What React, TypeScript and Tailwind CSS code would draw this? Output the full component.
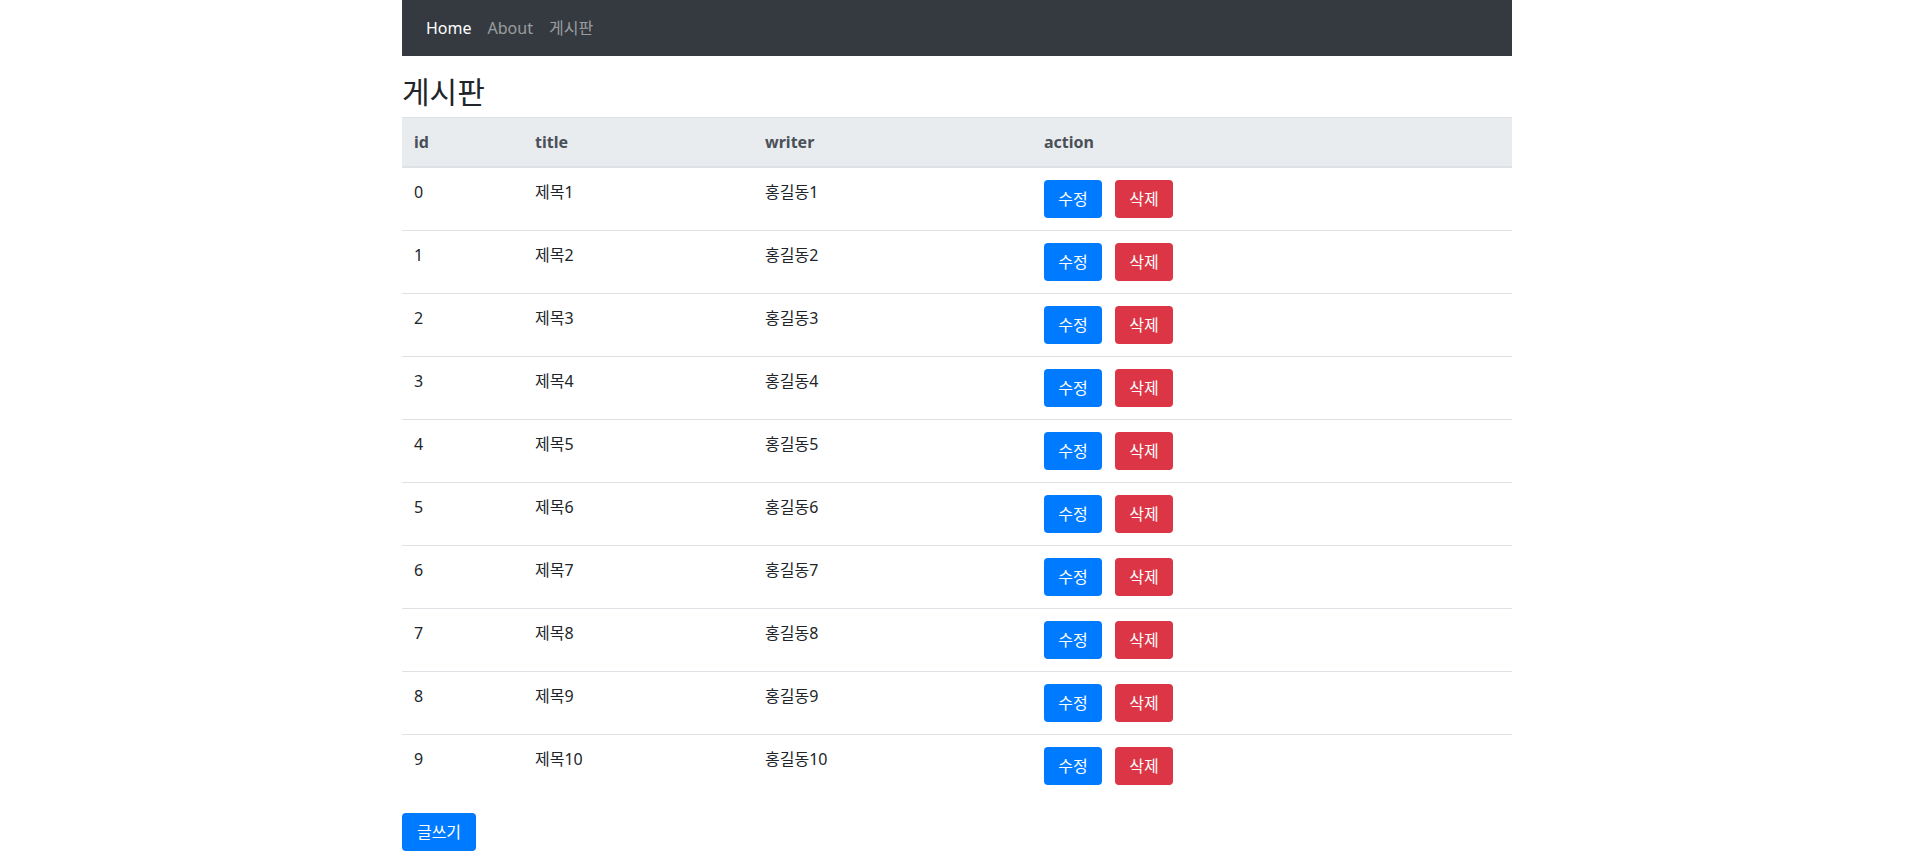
import React from "react";

const rows = Array.from({ length: 10 }, (_, i) => ({
  id: i,
  title: `제목${i + 1}`,
  writer: `홍길동${i + 1}`,
}));

export default function App() {
  return (
    <div className="w-full min-h-[860px] bg-white text-[#212529] text-[16px] leading-[24px] font-['Noto_Sans','Noto_Sans_CJK_KR',sans-serif]">
      <div className="w-[1110px] mx-auto">
        <nav className="h-[56px] bg-[#343a40] flex items-center px-[16px]">
          <a className="px-[8px] text-white leading-[24px]">Home</a>
          <a className="px-[8px] text-white/50 leading-[24px]">About</a>
          <a className="px-[8px] text-white/50 leading-[24px]">게시판</a>
        </nav>
        <h2 className="mt-[17px] mb-[6px] text-[30px] leading-[38px] font-normal">
          게시판
        </h2>
        <table className="w-full border-collapse mb-[16px]">
          <thead>
            <tr className="bg-[#e9ecef] text-[#495057]">
              <th className="w-[121px] text-left font-bold px-[12px] py-[12px] border-t border-[#dee2e6] border-b-2">
                id
              </th>
              <th className="w-[230px] text-left font-bold px-[12px] py-[12px] border-t border-[#dee2e6] border-b-2">
                title
              </th>
              <th className="w-[279px] text-left font-bold px-[12px] py-[12px] border-t border-[#dee2e6] border-b-2">
                writer
              </th>
              <th className="text-left font-bold px-[12px] py-[12px] border-t border-[#dee2e6] border-b-2">
                action
              </th>
            </tr>
          </thead>
          <tbody>
            {rows.map((r, idx) => (
              <tr key={r.id} className={idx === 0 ? "" : "border-t border-[#dee2e6]"}>
                <td className="px-[12px] py-[12px] align-top">{r.id}</td>
                <td className="px-[12px] py-[12px] align-top">{r.title}</td>
                <td className="px-[12px] py-[12px] align-top">{r.writer}</td>
                <td className="px-[12px] py-[12px] align-top">
                  <div className="flex gap-[13px]">
                    <button className="h-[38px] w-[58px] rounded-[4px] bg-[#007bff] text-white leading-[24px]">
                      수정
                    </button>
                    <button className="h-[38px] w-[58px] rounded-[4px] bg-[#dc3545] text-white leading-[24px]">
                      삭제
                    </button>
                  </div>
                </td>
              </tr>
            ))}
          </tbody>
        </table>
        <button className="h-[38px] w-[74px] rounded-[4px] bg-[#007bff] text-white leading-[24px]">
          글쓰기
        </button>
      </div>
    </div>
  );
}
